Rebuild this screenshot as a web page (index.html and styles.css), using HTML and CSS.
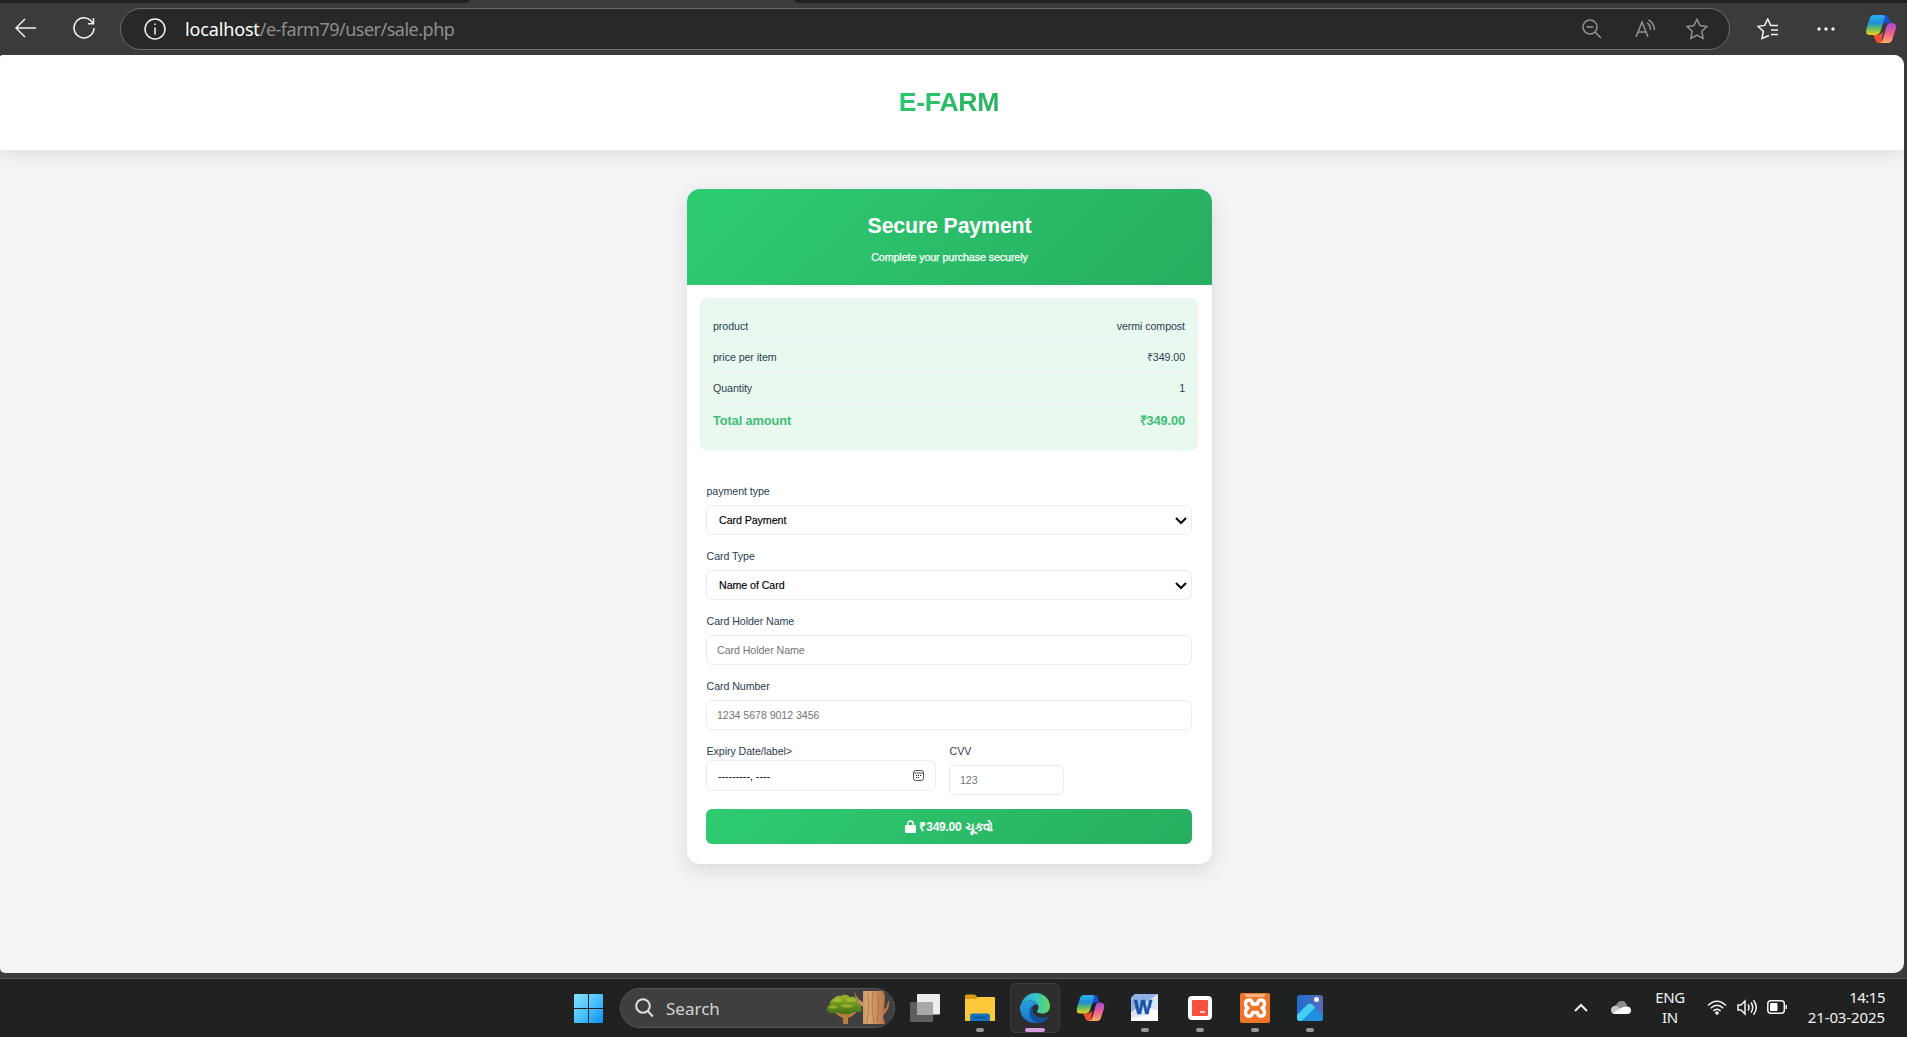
FILE: index.html
```html
<!DOCTYPE html>
<html lang="en">
<head>
<meta charset="utf-8">
<title>E-FARM – Secure Payment</title>
<link rel="stylesheet" href="styles.css">
</head>
<body>
<svg class="defs" width="0" height="0" aria-hidden="true">
  <defs>
    <linearGradient id="cpA" x1="0" y1="0" x2="0" y2="1"><stop offset="0" stop-color="#2bb0ee"/><stop offset=".4" stop-color="#1e8fd8"/><stop offset=".7" stop-color="#6bbf59"/><stop offset="1" stop-color="#f5cf1d"/></linearGradient>
    <linearGradient id="cpB" x1="0" y1="0" x2="0" y2="1"><stop offset="0" stop-color="#a24be0"/><stop offset=".5" stop-color="#ee5c8f"/><stop offset="1" stop-color="#fbb060"/></linearGradient>
    <symbol id="copilot" viewBox="0 0 30 28">
      <path d="M14 0h5q3 0 4 3.500L24.500 8H20q-3 0-4 3l-3 2z" fill="#1d4fd0"/>
      <path d="M7 20h6l4-3-1 7q-1 4 2 4h-5q-3 0-4-4z" fill="#ee5030"/>
      <path d="M8 0h9q2.500 0 1.600 3l-4 13q-1.200 4-5.500 4H4q-5 0-3.800-5.500L3.500 4Q4.700 0 8 0z" fill="url(#cpA)"/>
      <path d="M22 28h-9q3 0 4-4l3.500-12.500Q21.700 8 25 8q6 0 4.800 5.500L26.500 24q-1 4-4.500 4z" fill="url(#cpB)"/>
    </symbol>
  </defs>
</svg>

<div class="tabs"><span class="tab tab-left"></span><span class="tab tab-right"></span></div>

<div class="toolbar">
  <svg class="back" width="21" height="20" viewBox="0 0 21 20"><path d="M10 1L1 10l9 9M1 10h20"/></svg>
  <svg class="reload" width="22" height="22" viewBox="0 0 22 22"><path d="M20 6.500A10 10 0 1 0 21 11M20.500 1v5.800H15"/></svg>
  <div class="address">
    <svg class="info" width="22" height="22" viewBox="0 0 22 22"><circle cx="11" cy="11" r="10"/><path d="M11 9.500v7M11 5.500v1.500"/></svg>
    <span class="url"><b>localhost</b>/e-farm79/user/sale.php</span>
    <svg class="zoom-out" width="20" height="20" viewBox="0 0 20 20"><circle cx="8" cy="8" r="7"/><path d="M13 13l6 6M4.500 8h7"/></svg>
    <svg class="read" width="21" height="19" viewBox="0 0 21 19"><path d="M1 18L7 3l6 15M3.500 13h7M12 4q3.500 2 3.500 7M13.500.8q5.500 3 6 10.200"/></svg>
    <svg class="star" width="22" height="22" viewBox="0 0 22 22"><path d="M11 1.200l3 6.400 6.900.9-5.100 4.800 1.300 7.100L11 17l-6.100 3.400 1.300-7.100L1.100 8.500 8 7.600z"/></svg>
  </div>
  <svg class="favs" width="22" height="22" viewBox="0 0 22 22"><path d="M12 17.500l-7 3 1.300-7.300L1 8.300l6.700-.9L10.700 1l3 6.400H21M14 12h7M14 16.500h7"/></svg>
  <svg class="dots" width="18" height="4" viewBox="0 0 18 4"><circle cx="2" cy="2" r="1.700"/><circle cx="9" cy="2" r="1.700"/><circle cx="16" cy="2" r="1.700"/></svg>
  <svg class="side-copilot" width="30" height="28"><use href="#copilot"/></svg>
</div>

<div class="page">
  <header class="site-header"><h1 class="brand">E-FARM</h1></header>
  <main class="card">
    <div class="card-head">
      <h2>Secure Payment</h2>
      <p>Complete your purchase securely</p>
    </div>
    <div class="summary">
      <div class="row"><span>product</span><span>vermi compost</span></div>
      <div class="row"><span>price per item</span><span>₹349.00</span></div>
      <div class="row"><span>Quantity</span><span>1</span></div>
      <div class="row total"><span>Total amount</span><span>₹349.00</span></div>
    </div>
    <form class="form">
      <div class="group">
        <label>payment type</label>
        <div class="select"><select><option>Card Payment</option></select>
          <svg width="12" height="8" viewBox="0 0 12 8"><path d="M1 1l5 5 5-5"/></svg></div>
      </div>
      <div class="group">
        <label>Card Type</label>
        <div class="select"><select><option>Name of Card</option></select>
          <svg width="12" height="8" viewBox="0 0 12 8"><path d="M1 1l5 5 5-5"/></svg></div>
      </div>
      <div class="group"><label>Card Holder Name</label><input type="text" placeholder="Card Holder Name"></div>
      <div class="group"><label>Card Number</label><input type="text" placeholder="1234 5678 9012 3456"></div>
      <div class="split">
        <div class="expiry">
          <label>Expiry Date/label&gt;</label>
          <div class="month"><span>---------, ----</span>
            <svg width="11" height="11" viewBox="0 0 11 11"><rect x=".5" y=".5" width="10" height="10" rx="2"/><path d="M1 3h9"/><path class="days" d="M3 5.500h1M5 5.500h1M7 5.500h1M3 7.500h1M5 7.500h1"/></svg>
          </div>
        </div>
        <div class="cvv"><label>CVV</label><input type="text" placeholder="123"></div>
      </div>
      <button class="pay" type="button">
        <svg width="11" height="13" viewBox="0 0 11 13"><path d="M2.700 6V3.800a2.800 2.800 0 0 1 5.600 0V6" fill="none" stroke="#fff" stroke-width="1.500"/><rect y="5" width="11" height="8" rx="1.300" fill="#fff"/></svg>
        <span>₹349.00 <span class="verb">ચૂકવો</span></span>
      </button>
    </form>
  </main>
</div>

<footer class="taskbar">
  <div class="apps">
    <svg class="win" width="29" height="29" viewBox="0 0 29 29"><defs><linearGradient id="w" x1="0" y1="0" x2="1" y2="1"><stop offset="0" stop-color="#8ae0ff"/><stop offset=".5" stop-color="#4cc2ff"/><stop offset="1" stop-color="#0a90f5"/></linearGradient></defs><path fill="url(#w)" d="M1 0h13v14H0V1q0-1 1-1zM15 0h13q1 0 1 1v13H15zM0 15h14v14H1q-1 0-1-1zM15 15h14v13q0 1-1 1H15z"/></svg>
    <div class="search">
      <svg class="lens" width="19" height="20" viewBox="0 0 19 20"><circle cx="8" cy="8" r="6.800"/><path d="M12.800 13l5 5.500"/></svg>
      <span>Search</span>
      <svg class="tree" width="64" height="34" viewBox="0 0 64 34">
        <defs><linearGradient id="leaf" x1="0" y1="0" x2="0" y2="1"><stop offset="0" stop-color="#9bb526"/><stop offset="1" stop-color="#417217"/></linearGradient><linearGradient id="bark"><stop offset="0" stop-color="#b07649"/><stop offset=".4" stop-color="#dba674"/><stop offset="1" stop-color="#a9683b"/></linearGradient></defs>
        <path d="M17 33v-6q-7-3-9-7l9 3 3-5 2 5 9-3q-3 5-9 7v6z" fill="#b77a3f"/>
        <path d="M5 22q-5-1-4-5 0-3 3-3-1-5 4-6 2-4 7-3 5-3 9 1 6-1 7 4 5 1 4 6 2 3-1 5-4 1-6-1-3 4-8 3-5 1-8-3-3 3-7 2z" fill="url(#leaf)"/>
        <g fill="#b4c738" opacity=".6"><ellipse cx="11" cy="9" rx="5" ry="2"/><ellipse cx="25" cy="9" rx="5" ry="2"/><ellipse cx="7" cy="16" rx="4" ry="1.600"/><ellipse cx="21" cy="15" rx="6" ry="1.600"/></g>
        <path d="M28 0q1 2 2.500 5 2 4 6.500 6V0h20q2 3 2 6l-1 13q3-3 4-9l1.500 0q0 9-5.500 13l-1 3 2 7H37V16q-6-4-7.500-9z" fill="url(#bark)"/>
        <path d="M42 2q2 14-1 30M47 1q-2 14 1 31M52 3q2 13-1 28" fill="none" stroke="#9a6035" stroke-width=".6"/>
      </svg>
    </div>
    <div class="app taskview"><svg width="30" height="29" viewBox="0 0 30 29"><rect y="8" width="23" height="20" rx="1" fill="#5e5e5e"/><rect x="7" width="23" height="20.500" rx="1" fill="#ededed"/><rect x="7" y="8" width="16" height="12.500" fill="#a8a8a8"/></svg></div>
    <div class="app running"><svg width="30" height="28" viewBox="0 0 30 28"><path d="M0 2q0-1.500 1.500-1.500H9q1 0 2 1L13 4v4H0z" fill="#d99a16"/><path d="M0 5h11l2-2h16q1 0 1 1v23H0z" fill="#fdc93b"/><path d="M5 27v-5q0-2.500 2.500-2.500h15Q25 19.500 25 22v5z" fill="#1673bd"/><path d="M8.500 23.500h13" stroke="#0b4f8c" stroke-width="1.500"/></svg></div>
    <div class="app active"><svg width="30" height="30" viewBox="0 0 30 30"><defs><linearGradient id="e1"><stop offset="0" stop-color="#2ba9dc"/><stop offset=".5" stop-color="#35c4ca"/><stop offset="1" stop-color="#62dd52"/></linearGradient><linearGradient id="e2" x1="0" y1="0" x2=".3" y2="1"><stop offset="0" stop-color="#2aa5dc"/><stop offset="1" stop-color="#1473c8"/></linearGradient></defs><path d="M1 11C4 3 10 0 15.500 0 24 0 30 6.500 30 13c0 5-3.500 7.500-8 7.500-3 0-5-1-5-2.300 0-1 1.500-1.500 1.500-4.200C18.500 10 14 7.500 10 7.500 5.500 7.500 2.500 9 1 11z" fill="url(#e1)"/><path d="M0 15C0 9.500 5 7.500 9.500 7.500c5 0 9 2.800 9 6.500 0-2-2-3.200-4.500-2-5 2.500-4 13.500 4.500 15.500 3.500.7 7-.5 8.500-2-2.500 3-6.500 4.500-11.500 4.500C6 30 0 23 0 15z" fill="url(#e2)"/><path d="M11 14c-4 7 1 16 8 16 3.500 0 7-2.500 9-5.500.5-1-.5-1-1.200-.7C20 27 12.500 22 12.500 16.500q0-2 1.500-4-2 .2-3 1.500z" fill="#134f9c"/></svg></div>
    <div class="app"><svg class="cp" width="29" height="26" viewBox="0 0 30 28"><use href="#copilot" width="30" height="28"/></svg></div>
    <div class="app running"><svg width="28" height="28" viewBox="0 0 28 28"><path d="M4 0h23v27H0V4z" fill="#dce6f7"/><path d="M4 0h23L0 18V4z" fill="#8fb0e2"/><path d="M0 24q14-1 27-9v12H0z" fill="#f8fafe"/><text x="3" y="20" class="word" textLength="18" lengthAdjust="spacingAndGlyphs">W</text><path d="M19 14l8 3-2 9-8-3z" fill="#fff"/></svg></div>
    <div class="app running"><svg width="24" height="24" viewBox="0 0 24 24"><rect width="24" height="24" rx="4" fill="#fff"/><rect x="4" y="4" width="16" height="16" rx="1" fill="#f9513d"/><path d="M12 16h5" stroke="#fff" stroke-width="1.500"/></svg></div>
    <div class="app running"><svg width="30" height="30" viewBox="0 0 30 30"><rect width="30" height="30" rx="2" fill="#ee7527"/><path d="M4 1h22l-2 3H6z" fill="#f7b184"/><path d="M12.500 11h5C18 5.500 24.500 6 24.500 11q0 2.500-2.500 4 2.500 1.500 2.500 4.500c0 5-6.500 5-7 0h-5c-.5 5-7 5-7 0q0-3 2.500-4.500-2.500-1.500-2.500-4c0-5 6.500-5.500 7 0z" fill="none" stroke="#fff" stroke-width="3.400" stroke-linejoin="round"/></svg></div>
    <div class="app running"><svg width="26" height="26" viewBox="0 0 26 26"><defs><linearGradient id="ph" x1="0" y1="0" x2="1" y2="0"><stop offset="0" stop-color="#1d6fd0"/><stop offset="1" stop-color="#5869ba"/></linearGradient></defs><rect width="26" height="26" rx="3" fill="url(#ph)"/><path d="M10 10q3-2.500 6 0l10 10.500V23q0 3-3 3H3z" fill="#2190dc"/><path d="M0 20L10 10q3-2.500 6 0l2 2.500L4.500 26H3q-3 0-3-3z" fill="#45cff5"/><circle cx="19.500" cy="4.500" r="2.500" fill="#fff"/></svg></div>
  </div>
  <div class="tray">
    <svg class="chev" width="14" height="9" viewBox="0 0 14 9"><path d="M1 8l6-6 6 6"/></svg>
    <svg class="cloud" width="20" height="13" viewBox="0 0 20 13"><path d="M5 5q1-5 6-5 4 0 5 5l-6 5z" fill="#8c8c8c"/><path d="M4 13q-4 0-4-4t5-4.500L16 12z" fill="#c9c9c9"/><path d="M2 12l10-6q8-2 8 3.500 0 3.500-4 3.500H4z" fill="#fff"/></svg>
    <div class="lang"><span>ENG</span><span>IN</span></div>
    <svg class="wifi" width="20" height="15" viewBox="0 0 20 15"><path d="M1 5.500q9-8.500 18 0M3.700 8.300q6.300-6 12.600 0M6.300 11q3.700-3.500 7.400 0"/><circle cx="10" cy="13" r="1.800" fill="#fff" stroke="none"/></svg>
    <svg class="vol" width="21" height="17" viewBox="0 0 21 17"><path d="M1 6h3l4-4v13l-4-4H1zM11 5.500q2 3 0 6M14 3.500q3.500 5 0 10M16.500 1.200q5.500 7.300 0 14.600"/></svg>
    <svg class="bat" width="21" height="14" viewBox="0 0 21 14"><rect x=".8" y=".8" width="16.500" height="12.400" rx="3"/><rect x="3" y="3" width="7.500" height="8" rx="1" fill="#fff" stroke="none"/><path d="M19.200 5v4"/></svg>
    <div class="clock"><span>14:15</span><span>21-03-2025</span></div>
  </div>
</footer>
</body>
</html>
```
FILE: styles.css
```css
* { box-sizing: border-box; }

body {
  margin: 0;
  width: 1907px;
  height: 1037px;
  overflow: hidden;
  display: flex;
  flex-direction: column;
  background: #3b3b3b;
  font-family: "Liberation Sans", Arial, sans-serif;
}

svg { display: block; flex: none; }
.defs { position: absolute; }

/* Browser chrome */
.tabs { height: 3px; display: flex; justify-content: space-between; }
.tab { background: #202020; }
.tab-left { width: 470px; border-bottom-right-radius: 6px 3px; }
.tab-right { width: 1113px; border-bottom-left-radius: 6px 3px; }

.toolbar {
  height: 52px;
  display: flex;
  align-items: center;
  padding: 0 11px 0 15px;
}
.toolbar svg { fill: none; stroke: #f2f2f2; stroke-width: 1.500px; }
.toolbar .back { margin-right: 37px; margin-top: -2px; }
.toolbar .reload { margin-right: 25px; margin-top: -2px; }
.address {
  width: 1610px;
  height: 42px;
  display: flex;
  align-items: center;
  padding: 0 21px 0 23px;
  border: 1px solid #6a6a6a;
  border-radius: 21px;
  background: #282828;
}
.url {
  flex: 1;
  margin: 0 0 0 19px;
  color: #8e8e8e;
  font: 18px "Noto Sans", sans-serif;
  letter-spacing: -.5px;
}
.url b { color: #fff; font-weight: 400; letter-spacing: -.15px; }
.toolbar .address .zoom-out, .toolbar .address .read, .toolbar .address .star { stroke: #929292; }
.zoom-out { margin-right: 33px; }
.read { margin: -2px 30px 0 0; }
.toolbar .favs { margin: 0 38px 0 27px; }
.toolbar .dots { fill: #f2f2f2; stroke: none; margin-right: 31px; }
.toolbar .side-copilot { stroke: none; }

/* Shop page */
.page {
  width: 1904px;
  height: 918px;
  border-radius: 3px 10px 10px 5px;
  overflow: hidden;
  background: #f4f4f7;
  color: #2c3e50;
  font-size: 10.670px;
  letter-spacing: -.07px;
}
.site-header {
  height: 95px;
  display: flex;
  align-items: center;
  justify-content: center;
  padding-bottom: 2px;
  background: #fff;
  box-shadow: 0 2px 20px rgba(0, 0, 0, .1);
}
.brand {
  margin: 0 0 0 -6px;
  font-size: 26.670px;
  line-height: 40px;
  letter-spacing: -.3px;
  background: linear-gradient(135deg, #2ecc71, #27ae60);
  -webkit-background-clip: text;
  background-clip: text;
  color: transparent;
}
.card {
  width: 525px;
  height: 675px;
  margin: 39px 0 0 687px;
  overflow: hidden;
  border-radius: 13px;
  background: #fff;
  box-shadow: 0 7px 20px rgba(0, 0, 0, .1);
}
.card-head {
  height: 96px;
  padding-top: 21px;
  text-align: center;
  color: #fff;
  background: linear-gradient(135deg, #2ecc71, #27ae60);
}
.card-head h2 { margin: 0; font-size: 21.330px; line-height: 32px; letter-spacing: -.15px; }
.card-head p { margin: 7px 0 0; line-height: 16px; -webkit-text-stroke: .25px #fff; }
.summary {
  height: 153px;
  margin: 13px 14px 0 13px;
  padding: 13px;
  border-radius: 7px;
  background: #e9f9f0;
}
.row {
  height: 31px;
  display: flex;
  align-items: center;
  justify-content: space-between;
  border-bottom: 1px solid #ebedee;
}
.row.total { border: 0; height: 32px; color: #40bd76; font-size: 12.800px; font-weight: 700; letter-spacing: -.1px; }
.form { padding: 32px 20px 0 19px; }
.group { height: 65px; }
label { display: block; height: 22px; line-height: 16px; padding-left: .5px; }
input, .select, .month {
  width: 100%;
  height: 30px;
  border: 1px solid #ececec;
  border-radius: 6px;
  background: #fff;
  font: inherit;
  letter-spacing: inherit;
}
input { display: block; padding: 0 10px; }
input::placeholder { color: #757575; }
.select { display: flex; align-items: center; padding-right: 4px; }
select {
  flex: 1;
  padding: 0 12px;
  border: 0;
  background: none;
  color: #000;
  font: inherit;
  letter-spacing: inherit;
  appearance: none;
  -webkit-text-stroke: .15px #000;
}
.select path { fill: none; stroke: #000; stroke-width: 2px; }
.select svg { margin-top: 2px; }
.split { display: flex; gap: 13px; height: 66px; }
.expiry { width: 230px; }
.expiry label { height: 17px; }
.month { height: 31px; display: flex; align-items: center; justify-content: space-between; padding: 0 11px; color: #000; letter-spacing: 0; }
.month svg { fill: none; stroke: #555; stroke-width: 1px; }
.month .days { stroke: #111; }
.cvv { width: 115px; }
.pay {
  width: 100%;
  height: 35px;
  display: flex;
  align-items: center;
  justify-content: center;
  gap: 3px;
  border: 0;
  border-radius: 6px;
  color: #fff;
  background: linear-gradient(135deg, #2ecc71, #27ae60);
  font: 700 12px "Liberation Sans", Arial, sans-serif;
  letter-spacing: -.25px;
}
.verb { font-size: 11.500px; letter-spacing: 0; }

/* Desktop taskbar */
.taskbar {
  height: 59px;
  margin-top: 5px;
  display: flex;
  align-items: center;
  border-top: 1px solid #505050;
  background: #202221;
  color: #f2f2f2;
  font-family: "Noto Sans", sans-serif;
}
.apps { display: flex; align-items: center; padding-left: 574px; }
.search {
  width: 275px;
  height: 40px;
  margin: 0 5px 0 17px;
  display: flex;
  align-items: center;
  padding: 0 4px 0 14px;
  border: 1px solid #545454;
  border-radius: 20px;
  background: #3e3f3e;
  color: #d2d2d2;
  font-size: 17px;
}
.search span { flex: 1; margin-left: 12px; }
.lens { fill: none; stroke: #e0e0e0; stroke-width: 2px; }
.app {
  position: relative;
  width: 50px;
  height: 50px;
  margin-right: 5px;
  display: flex;
  align-items: center;
  justify-content: center;
}
.active { border: 1px solid #3c3c3c; border-radius: 6px; background: #2e2e2e; }
.running::after, .active::after {
  content: "";
  position: absolute;
  bottom: 1px;
  left: 21px;
  width: 8px;
  height: 4px;
  border-radius: 2px;
  background: #969696;
}
.active::after { left: 14px; bottom: 0; width: 20px; background: #d99be0; }
.word { font: 700 20px "Liberation Sans", sans-serif; fill: #1552a8; stroke: #1552a8; stroke-width: .6px; }
.tray {
  flex: 1;
  display: flex;
  align-items: center;
  justify-content: flex-end;
  padding: 0 22px 2px 0;
  font-size: 15px;
  line-height: 20px;
}
.tray svg { fill: none; stroke: #f2f2f2; stroke-width: 1.500px; }
.tray .chev { stroke-width: 2px; margin-right: 23px; }
.tray .cloud { stroke: none; margin-right: 24px; }
.lang, .clock { display: flex; flex-direction: column; align-items: center; }
.lang { margin-right: 22px; letter-spacing: -.4px; }
.wifi { margin-right: 10px; }
.vol { margin-right: 9px; }
.bat { margin-right: 20px; }
.clock { align-items: flex-end; letter-spacing: -.1px; }
.clock span:first-child { letter-spacing: -.5px; }
```
